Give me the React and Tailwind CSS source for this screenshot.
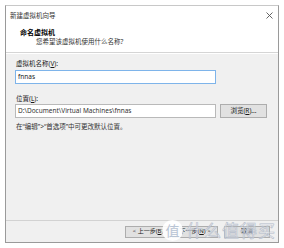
export default function App() {
  const font = "font-['Noto_Sans','Noto_Sans_CJK_SC',sans-serif]"

  return (
    <div className={`relative w-[284px] h-[248px] bg-white pt-[5px] pl-[5px] ${font} text-[#1a1a1a]`}>
      <div className="w-[274px] h-[238px] border border-[#9a9a9a] border-t-[#c8c8c8] flex flex-col">
        {/* Title bar */}
        <div className="h-[18px] flex items-center justify-between pl-[4px] pr-[4px] bg-white">
          <span className="text-[6.5px] leading-[9px] text-[#333]">新建虚拟机向导</span>
          <svg width="7" height="7" viewBox="0 0 7 7" className="mr-[1px]">
            <path d="M0.5 0.5 L6.5 6.5 M6.5 0.5 L0.5 6.5" stroke="#555" strokeWidth="0.9" />
          </svg>
        </div>

        {/* Header */}
        <div className="bg-white pt-[4px] pb-[6px] pl-[14px] border-b border-[#d5d5d5]">
          <div className="text-[7px] leading-[9px] font-bold text-black">命名虚拟机</div>
          <div className="pl-[16px] text-[6.5px] leading-[9px] text-[#333]">您希望该虚拟机使用什么名称?</div>
        </div>

        {/* Body */}
        <div className="flex-1 bg-[#f0f0f0] flex flex-col border-t border-white">
          <div className="px-[9px] pt-[5px] flex flex-col">
            <div className="text-[6.5px] leading-[9px] pl-[1px]">
              虚拟机名称(<span className="underline">V</span>):
            </div>
            <div className="mt-[2px] w-[201px] h-[14px] bg-white border border-[#7eb4ea] flex items-center pl-[2px] text-[6.5px]">
              fnnas
            </div>
            <div className="mt-[10px] text-[6.5px] leading-[9px] pl-[1px]">
              位置(<span className="underline">L</span>):
            </div>
            <div className="mt-[1px] flex items-center gap-[4px]">
              <div className="w-[201px] h-[14px] bg-white border border-[#b9b9b9] flex items-center pl-[2px] text-[6.5px] text-[#333]">
                D:\Document\Virtual Machines\fnnas
              </div>
              <div className="w-[47px] h-[14px] bg-[#e1e1e1] border border-[#adadad] flex items-center justify-center text-[6.5px]">
                浏览(<span className="underline">R</span>)...
              </div>
            </div>
            <div className="mt-[4px] text-[6.5px] leading-[9px] pl-[1px] text-[#333]">
              在“编辑”&gt;“首选项”中可更改默认位置。
            </div>
          </div>

          <div className="flex-1" />

          {/* Footer */}
          <div className="border-t border-[#d2d2d2] h-[22px] flex items-center justify-end pr-[8px]">
            <div className="flex items-center">
              <div className="w-[46px] h-[12px] bg-[#e1e1e1] border border-[#adadad] flex items-center justify-center text-[6px]">
                &lt; 上一步(<span className="underline">B</span>)
              </div>
              <div className="w-[46px] h-[12px] bg-[#e1e1e1] border border-[#adadad] flex items-center justify-center text-[6px] ml-[1px]">
                下一步(<span className="underline">N</span>) &gt;
              </div>
              <div className="w-[46px] h-[12px] bg-[#e1e1e1] border border-[#adadad] flex items-center justify-center text-[6px] ml-[6px]">
                取消
              </div>
            </div>
          </div>
        </div>
      </div>

      {/* Watermark */}
      <div className="absolute left-[162px] top-[220px] flex items-center gap-[3px] pointer-events-none">
        <div className="w-[21px] h-[21px] rounded-full bg-white/90 flex items-center justify-center text-[14px] leading-none text-[#b8c4d4]">
          值
        </div>
        <div className="text-[17px] leading-none tracking-[1px] text-white/40 [-webkit-text-stroke:0.6px_#b4bccb]">
          什么值得买
        </div>
      </div>
    </div>
  )
}
